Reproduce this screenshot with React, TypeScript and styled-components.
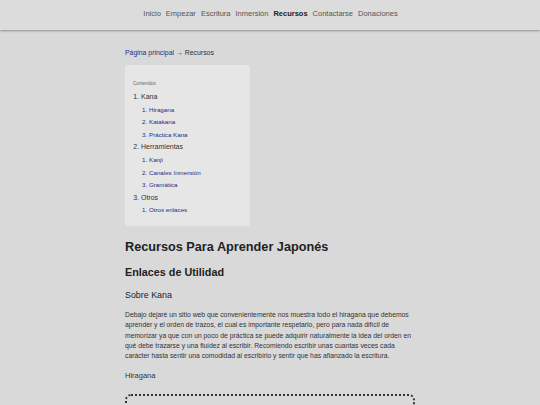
import React from "react";
import styled, { createGlobalStyle } from "styled-components";

const GlobalStyle = createGlobalStyle`
	html, body {
		margin: 0;
		padding: 0;
		background: #d9d9d9;
		font-family: "Liberation Sans", Arial, sans-serif;
		color: #333;
	}
`;

const navItems = [
	"Inicio",
	"Empezar",
	"Escritura",
	"Inmersión",
	"Recursos",
	"Contactarse",
	"Donaciones",
];

const toc = [
	{ title: "Kana", children: ["Hiragana", "Katakana", "Práctica Kana"] },
	{ title: "Herramientas", children: ["Kanji", "Canales Inmersión", "Gramática"] },
	{ title: "Otros", children: ["Otros enlaces"] },
];

const App = () => {
	return (
		<React.Fragment>
			<GlobalStyle />
			<Header>
				<Nav>
					{navItems.map((item) => (
						<NavLink key={item} $active={item === "Recursos"}>
							{item}
						</NavLink>
					))}
				</Nav>
			</Header>
			<Main>
				<Breadcrumb>
					<Crumb>Página principal</Crumb> → Recursos
				</Breadcrumb>
				<Toc>
					<TocTitle>Contenidos</TocTitle>
					<TocList>
						{toc.map((section) => (
							<TocItem key={section.title}>
								{section.title}
								<TocSubList>
									{section.children.map((child) => (
										<TocSubItem key={child}>{child}</TocSubItem>
									))}
								</TocSubList>
							</TocItem>
						))}
					</TocList>
				</Toc>
				<Title>Recursos Para Aprender Japonés</Title>
				<Subtitle>Enlaces de Utilidad</Subtitle>
				<Section>Sobre Kana</Section>
				<Paragraph>
					Debajo dejaré un sitio web que convenientemente nos muestra todo el
					hiragana que debemos aprender y el orden de trazos, el cual es
					importante respetarlo, pero para nada difícil de memorizar ya que con
					un poco de práctica se puede adquirir naturalmente la idea del orden
					en qué debe trazarse y una fluidez al escribir. Recomiendo escribir
					unas cuantas veces cada carácter hasta sentir una comodidad al
					escribirlo y sentir que has afianzado la escritura.
				</Paragraph>
				<Label>Hiragana</Label>
				<LinkBox>
					<LinkText>Hiragana - orden de trazos y pronunciación</LinkText>
				</LinkBox>
			</Main>
		</React.Fragment>
	);
};

const Header = styled.header`
	height: 30px;
	box-sizing: border-box;
	padding-bottom: 4px;
	background: #dcdcdc;
	box-shadow: 0 1px 2px rgba(0, 0, 0, 0.35);
	display: flex;
	align-items: center;
	justify-content: center;
`;

const Nav = styled.nav`
	display: flex;
	gap: 5px;
	margin-left: 1px;
`;

const NavLink = styled.span<{ $active?: boolean }>`
	font-size: 7.5px;
	color: ${(p) => (p.$active ? "#222" : "#555")};
	font-weight: ${(p) => (p.$active ? "bold" : "normal")};
`;

const Main = styled.main`
	width: 290px;
	margin: 0 auto;
	padding-top: 19px;
`;

const Breadcrumb = styled.div`
	font-size: 6.9px;
	color: #333;
`;

const Crumb = styled.span`
	color: #2a2a7e;
`;

const Toc = styled.div`
	width: 125px;
	box-sizing: border-box;
	margin-top: 9px;
	padding: 16px 8px 9px;
	background: #e6e6e6;
	border-radius: 3px;
`;

const TocTitle = styled.div`
	font-size: 4.5px;
	color: #666;
	margin-bottom: 5px;
`;

const TocList = styled.ol`
	margin: 0;
	padding-left: 8px;
	font-size: 7px;
	color: #333;
`;

const TocItem = styled.li`
	line-height: 12.6px;
`;

const TocSubList = styled.ol`
	margin: 0;
	padding-left: 8px;
`;

const TocSubItem = styled.li`
	font-size: 6.2px;
	color: #2a2a7e;
	line-height: 12.6px;
`;

const Title = styled.h1`
	font-size: 12.7px;
	font-weight: bold;
	color: #222;
	margin: 14px 0 0;
`;

const Subtitle = styled.h2`
	font-size: 10.8px;
	font-weight: bold;
	color: #222;
	margin: 12px 0 0;
`;

const Section = styled.h3`
	font-size: 8.9px;
	font-weight: normal;
	color: #222;
	margin: 12px 0 0;
`;

const Paragraph = styled.p`
	font-size: 6.8px;
	line-height: 10.3px;
	color: #333;
	margin: 10px 0 0;
`;

const Label = styled.div`
	font-size: 7.5px;
	color: #333;
	margin-top: 9.5px;
`;

const LinkBox = styled.div`
	margin-top: 14px;
	border: 2px dotted #333;
	border-radius: 6px;
	padding: 6px 10px;
	text-align: center;
`;

const LinkText = styled.span`
	font-size: 7px;
	color: #777;
`;

export default App;
